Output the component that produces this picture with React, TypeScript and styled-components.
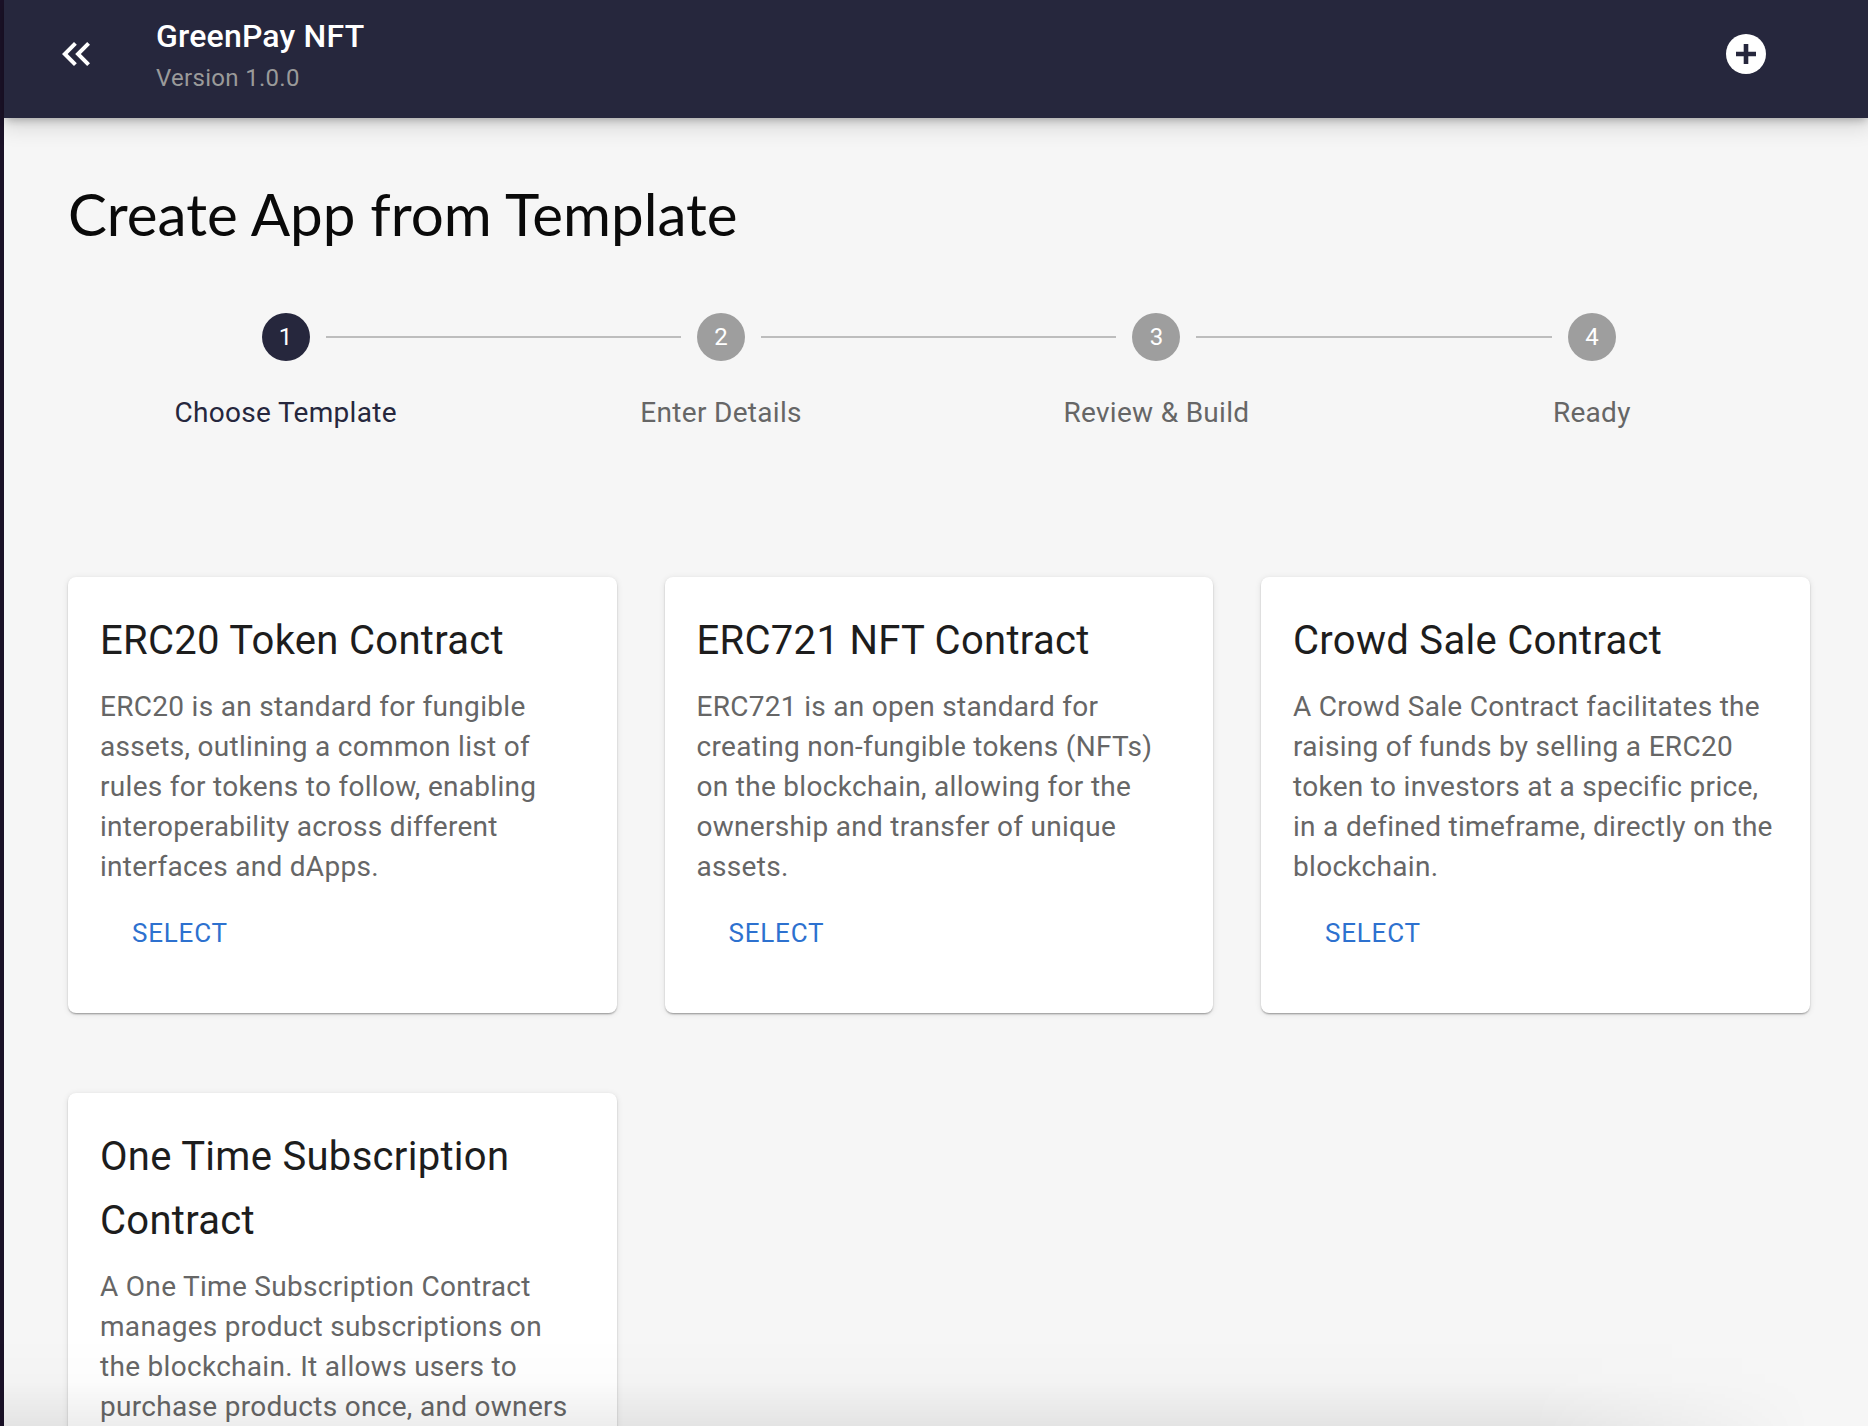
import { Fragment } from "react";
import styled, { createGlobalStyle } from "styled-components";

const GlobalStyle = createGlobalStyle`
  html, body {
    margin: 0;
    padding: 0;
    background: #f6f6f6;
  }
  * {
    box-sizing: border-box;
  }
`;

const Shell = styled.div`
  position: relative;
  width: 1868px;
  height: 1426px;
  overflow: hidden;
  display: flex;
  background: #f6f6f6;
  font-family: Roboto, "Liberation Sans", sans-serif;
`;

const SideEdge = styled.div`
  width: 4px;
  flex-shrink: 0;
  background: #1b1228;
`;

const Main = styled.div`
  flex: 1;
  display: flex;
  flex-direction: column;
`;

const Header = styled.header`
  height: 118px;
  flex-shrink: 0;
  display: flex;
  align-items: center;
  padding: 0 103px 10px 48px;
  background: #26273d;
  box-shadow: 0 4px 8px -2px rgba(0, 0, 0, 0.25), 0 8px 20px 2px rgba(0, 0, 0, 0.12);
  position: relative;
  z-index: 1;
`;

const IconButton = styled.button`
  border: none;
  background: none;
  padding: 0;
  display: flex;
  color: #fff;
  cursor: pointer;
`;

const TitleBlock = styled.div`
  flex: 1;
  margin-left: 56px;
  display: flex;
  flex-direction: column;
  gap: 5px;
`;

const AppName = styled.div`
  font-size: 32px;
  line-height: 42px;
  font-weight: 500;
  letter-spacing: 0.2px;
  color: #fff;
`;

const Version = styled.div`
  font-size: 24px;
  line-height: 32px;
  letter-spacing: 0.3px;
  color: #9a9a9a;
`;

const Content = styled.main`
  padding: 0 59px 0 64px;
`;

const PageTitle = styled.h1`
  margin: 0;
  padding-top: 57px;
  font-family: Lato, "Open Sans", sans-serif;
  font-size: 58.3px;
  line-height: 76px;
  font-weight: 400;
  color: #0a0a0a;
`;

const CircleRow = styled.div`
  display: flex;
  align-items: center;
  padding: 0 193.6px;
  margin-top: 62px;
`;

const StepCircle = styled.div<{ $active?: boolean }>`
  width: 48px;
  height: 48px;
  flex-shrink: 0;
  border-radius: 50%;
  display: flex;
  align-items: center;
  justify-content: center;
  font-size: 24px;
  color: #fff;
  background: ${(p) => (p.$active ? "#26273d" : "#9e9e9e")};
`;

const Connector = styled.div`
  flex: 1;
  height: 2px;
  margin: 0 16px;
  background: #bdbdbd;
`;

const LabelRow = styled.div`
  display: grid;
  grid-template-columns: repeat(4, 1fr);
  margin-top: 32px;
`;

const StepLabel = styled.div<{ $active?: boolean }>`
  text-align: center;
  font-size: 28px;
  line-height: 40px;
  letter-spacing: 0.3px;
  color: ${(p) => (p.$active ? "#26273d" : "#666666")};
`;

const CardGrid = styled.div`
  display: grid;
  grid-template-columns: repeat(3, 548.5px);
  column-gap: 48px;
  row-gap: 80px;
  margin-top: 144px;
`;

const Card = styled.article`
  background: #fff;
  border-radius: 8px;
  padding: 32px 32px 44px;
  box-shadow: 0 2px 2px -1px rgba(0, 0, 0, 0.25), 0 1px 2px 0 rgba(0, 0, 0, 0.14), 0 1px 6px 0 rgba(0, 0, 0, 0.1);
`;

const CardTitle = styled.h2`
  margin: 0 0 14px;
  font-size: 40px;
  line-height: 64px;
  font-weight: 400;
  letter-spacing: 0.3px;
  color: #1d1d1d;
`;

const CardText = styled.p`
  margin: 0;
  font-size: 28px;
  line-height: 40px;
  letter-spacing: 0.3px;
  color: #666666;
`;

const SelectButton = styled.button`
  display: block;
  margin: 10px 0 0 32px;
  padding: 0;
  height: 72px;
  border: none;
  background: none;
  font-family: inherit;
  font-size: 26px;
  letter-spacing: 0.8px;
  color: #2d71cf;
  cursor: pointer;
`;

const BottomFade = styled.div`
  position: absolute;
  left: 0;
  right: 0;
  bottom: 0;
  height: 90px;
  background: linear-gradient(
    to bottom,
    rgba(0, 0, 0, 0),
    rgba(0, 0, 0, 0.012) 50%,
    rgba(0, 0, 0, 0.07)
  );
  mask-image: linear-gradient(to right, #000 82%, transparent 97%);
  pointer-events: none;
  z-index: 2;
`;

const steps = ["Choose Template", "Enter Details", "Review & Build", "Ready"];

const templates = [
  {
    title: "ERC20 Token Contract",
    text: "ERC20 is an standard for fungible assets, outlining a common list of rules for tokens to follow, enabling interoperability across different interfaces and dApps.",
  },
  {
    title: "ERC721 NFT Contract",
    text: "ERC721 is an open standard for creating non-fungible tokens (NFTs) on the blockchain, allowing for the ownership and transfer of unique assets.",
  },
  {
    title: "Crowd Sale Contract",
    text: "A Crowd Sale Contract facilitates the raising of funds by selling a ERC20 token to investors at a specific price, in a defined timeframe, directly on the blockchain.",
  },
  {
    title: "One Time Subscription Contract",
    text: "A One Time Subscription Contract manages product subscriptions on the blockchain. It allows users to purchase products once, and owners can manage and withdraw the funds.",
  },
];

export default function App() {
  return (
    <Shell>
      <GlobalStyle />
      <SideEdge />
      <Main>
        <Header>
          <IconButton aria-label="Collapse">
            <svg width="48" height="48" viewBox="0 0 24 24" fill="currentColor">
              <path d="M17.59 18 19 16.59 14.42 12 19 7.41 17.59 6l-6 6z" />
              <path d="m11 18 1.41-1.41L7.83 12l4.58-4.59L11 6l-6 6z" />
            </svg>
          </IconButton>
          <TitleBlock>
            <AppName>GreenPay NFT</AppName>
            <Version>Version 1.0.0</Version>
          </TitleBlock>
          <IconButton aria-label="Add">
            <svg width="40" height="40" viewBox="0 0 40 40">
              <circle cx="20" cy="20" r="20" fill="#fff" />
              <path d="M17.7 10h4.6v7.7H30v4.6h-7.7V30h-4.6v-7.7H10v-4.6h7.7z" fill="#26273d" />
            </svg>
          </IconButton>
        </Header>
        <Content>
          <PageTitle>Create App from Template</PageTitle>
          <CircleRow>
            {steps.map((step, i) => (
              <Fragment key={step}>
                {i > 0 && <Connector />}
                <StepCircle $active={i === 0}>{i + 1}</StepCircle>
              </Fragment>
            ))}
          </CircleRow>
          <LabelRow>
            {steps.map((step, i) => (
              <StepLabel key={step} $active={i === 0}>
                {step}
              </StepLabel>
            ))}
          </LabelRow>
          <CardGrid>
            {templates.map((t) => (
              <Card key={t.title}>
                <CardTitle>{t.title}</CardTitle>
                <CardText>{t.text}</CardText>
                <SelectButton>SELECT</SelectButton>
              </Card>
            ))}
          </CardGrid>
        </Content>
      </Main>
      <BottomFade />
    </Shell>
  );
}
